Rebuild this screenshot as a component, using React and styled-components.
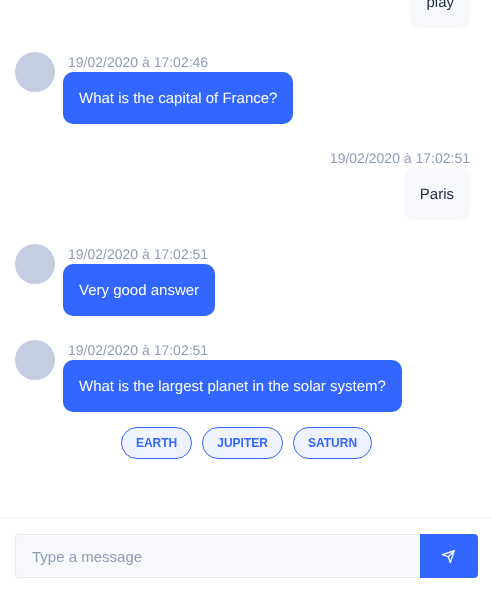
import React from "react";
import styled, { createGlobalStyle } from "styled-components";

const GlobalStyle = createGlobalStyle`
  html, body {
    margin: 0;
    height: 100%;
    overflow: hidden;
    background: #fff;
    font-family: "Liberation Sans", Arial, sans-serif;
    text-rendering: geometricPrecision;
  }
  #root {
    height: 100%;
  }
`;

const Chat = styled.div`
  display: flex;
  flex-direction: column;
  height: 590px;
  will-change: transform;
`;

const MessageList = styled.div`
  flex: 1;
  min-height: 0;
  overflow: hidden;
  display: flex;
  flex-direction: column;
  justify-content: flex-end;
  gap: 24px;
  padding: 0 22px 58px 15px;
`;

const Row = styled.div`
  flex: none;
  display: flex;
  justify-content: ${(p) => (p.$mine ? "flex-end" : "flex-start")};
  gap: 8px;
`;

const Avatar = styled.div`
  flex: none;
  width: 40px;
  height: 40px;
  border-radius: 50%;
  background: #c5cee0;
`;

const Body = styled.div`
  display: flex;
  flex-direction: column;
  align-items: ${(p) => (p.$mine ? "flex-end" : "flex-start")};
`;

const Stamp = styled.div`
  height: 20px;
  line-height: 20px;
  font-size: 14px;
  color: #8f9bb3;
  padding-left: ${(p) => (p.$mine ? "0" : "5px")};
`;

const Bubble = styled.div`
  padding: 17px 16px 15px;
  font-size: 15px;
  line-height: 20px;
  border-radius: 10px;
  background: ${(p) => (p.$mine ? "#f7f9fc" : "#3366ff")};
  color: ${(p) => (p.$mine ? "#222b45" : "#fff")};
`;

const Choices = styled.div`
  flex: none;
  display: flex;
  justify-content: center;
  gap: 10px;
  margin: -9px -8px 0 0;
`;

const Choice = styled.button`
  height: 32px;
  padding: 0 14px;
  border: 1px solid #3366ff;
  border-radius: 16px;
  background: rgba(51, 102, 255, 0.08);
  color: #3366ff;
  font-family: inherit;
  font-size: 12px;
  font-weight: 700;
`;

const Composer = styled.form`
  flex: none;
  display: flex;
  border-top: 1px solid #edf1f7;
  padding: 16px 14px 12px 15px;
`;

const Input = styled.input`
  flex: 1;
  min-width: 0;
  height: 44px;
  box-sizing: border-box;
  padding: 0 16px;
  border: 1px solid #e4e9f2;
  border-right: 0;
  border-radius: 4px 0 0 4px;
  background: #f7f9fc;
  color: #222b45;
  font-family: inherit;
  font-size: 15px;
  outline: none;

  &::placeholder {
    color: #8f9bb3;
    opacity: 1;
  }
`;

const SendButton = styled.button`
  flex: none;
  width: 58px;
  height: 44px;
  display: flex;
  align-items: center;
  justify-content: center;
  padding: 0;
  border: 0;
  border-radius: 0 4px 4px 0;
  background: #3366ff;
  color: #fff;
`;

const SendIcon = () => (
  <svg width="16" height="16" viewBox="0 0 24 24" fill="currentColor">
    <path d="M21 4a1.31 1.31 0 0 0-.06-.27v-.09a1 1 0 0 0-.2-.3 1 1 0 0 0-.29-.19h-.09a.86.86 0 0 0-.31-.15H20a1 1 0 0 0-.3 0l-18 6a1 1 0 0 0 0 1.9l8.53 2.84 2.84 8.53a1 1 0 0 0 1.9 0l6-18A1 1 0 0 0 21 4zm-4.7 2.29l-5.57 5.57L5.16 10zM14 18.84l-1.86-5.57 5.57-5.57z" />
  </svg>
);

const messages = [
  { mine: true, text: "play" },
  { time: "19/02/2020 à 17:02:46", text: "What is the capital of France?" },
  { mine: true, time: "19/02/2020 à 17:02:51", text: "Paris" },
  { time: "19/02/2020 à 17:02:51", text: "Very good answer" },
  { time: "19/02/2020 à 17:02:51", text: "What is the largest planet in the solar system?" },
];

export default function App() {
  return (
    <Chat>
      <GlobalStyle />
      <MessageList>
        {messages.map((m, i) => (
          <Row key={i} $mine={m.mine}>
            {!m.mine && <Avatar />}
            <Body $mine={m.mine}>
              {m.time && <Stamp $mine={m.mine}>{m.time}</Stamp>}
              <Bubble $mine={m.mine}>{m.text}</Bubble>
            </Body>
          </Row>
        ))}
        <Choices>
          <Choice type="button">EARTH</Choice>
          <Choice type="button">JUPITER</Choice>
          <Choice type="button">SATURN</Choice>
        </Choices>
      </MessageList>
      <Composer onSubmit={(e) => e.preventDefault()}>
        <Input placeholder="Type a message" />
        <SendButton type="button">
          <SendIcon />
        </SendButton>
      </Composer>
    </Chat>
  );
}
